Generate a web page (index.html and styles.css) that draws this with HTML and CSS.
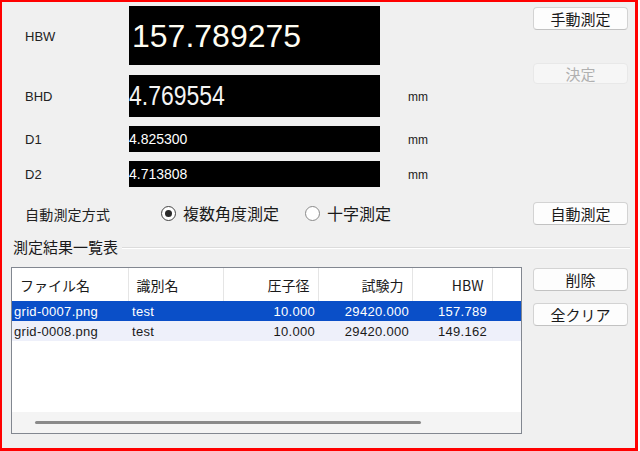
FILE: index.html
```html
<!DOCTYPE html>
<html lang="ja">
  <head>
    <meta charset="UTF-8" />
    <meta name="viewport" content="width=device-width, initial-scale=1.0" />
    <title>測定</title>
    <link rel="stylesheet" href="styles.css">
  </head>
  <body>
    <div class="window">
      <div class="top">
        <div class="label row-hbw">HBW</div>
        <div class="value big row-hbw"><span>157.789275</span></div>

        <div class="side">
          <button class="btn first">手動測定</button>
          <button class="btn disabled" disabled>決定</button>
        </div>

        <div class="label row-bhd">BHD</div>
        <div class="value mid row-bhd"><span>4.769554</span></div>
        <div class="unit row-bhd">mm</div>

        <div class="label row-d1">D1</div>
        <div class="value small row-d1"><span>4.825300</span></div>
        <div class="unit row-d1">mm</div>

        <div class="label row-d2">D2</div>
        <div class="value small row-d2"><span>4.713808</span></div>
        <div class="unit row-d2">mm</div>

        <div class="label jp row-mode">自動測定方式</div>
        <div class="radios row-mode">
          <label class="radio"><span class="dot checked"></span>複数角度測定</label>
          <label class="radio"><span class="dot"></span>十字測定</label>
        </div>
        <div class="btn-cell row-mode">
          <button class="btn">自動測定</button>
        </div>
      </div>

      <div class="group-title">
        <span>測定結果一覧表</span>
        <div class="etched"></div>
      </div>

      <div class="bottom">
        <div class="listbox">
          <div class="list-area">
            <table class="list">
              <colgroup>
                <col style="width: 116px" />
                <col style="width: 95px" />
                <col style="width: 95px" />
                <col style="width: 94px" />
                <col style="width: 80px" />
                <col />
              </colgroup>
              <thead>
                <tr>
                  <th>ファイル名</th>
                  <th>識別名</th>
                  <th class="num">圧子径</th>
                  <th class="num">試験力</th>
                  <th class="num">HBW</th>
                  <th class="filler"></th>
                </tr>
              </thead>
              <tbody>
                <tr class="selected">
                  <td class="first-col">grid-0007.png</td>
                  <td>test</td>
                  <td class="num">10.000</td>
                  <td class="num">29420.000</td>
                  <td class="num hbw">157.789</td>
                  <td></td>
                </tr>
                <tr class="alt">
                  <td class="first-col">grid-0008.png</td>
                  <td>test</td>
                  <td class="num">10.000</td>
                  <td class="num">29420.000</td>
                  <td class="num hbw">149.162</td>
                  <td></td>
                </tr>
              </tbody>
            </table>
          </div>
          <div class="hscroll"><div class="thumb"></div></div>
        </div>
        <div class="side-bottom">
          <button class="btn">削除</button>
          <button class="btn">全クリア</button>
        </div>
      </div>
    </div>
  </body>
</html>
```

FILE: styles.css
```css
body {
  margin: 0;
  padding: 0;
  background-color: #ffffff;
  font-family: "Noto Sans CJK JP", "Liberation Sans", sans-serif;
  color: #1a1a1a;
}
.window {
  box-sizing: border-box;
  width: 638px;
  height: 451px;
  border-style: solid;
  border-color: #ff0000;
  border-width: 2px 3px 3px 2px;
  background-color: #f0f0f0;
  padding-top: 4px;
}

/* upper measurement area */
.top {
  display: grid;
  grid-template-columns: 104px 251px 153px 95px;
  grid-template-rows: 59px 52px 35px 35px 39px;
  margin-left: 23px;
}
.row-hbw { grid-row: 1; }
.row-bhd { grid-row: 2; margin-top: 10px; }
.row-d1 { grid-row: 3; margin-top: 9px; }
.row-d2 { grid-row: 4; margin-top: 9px; }
.row-mode { grid-row: 5; margin-top: 13px; }
.label {
  grid-column: 1;
  display: flex;
  align-items: center;
  font-family: "Liberation Sans", sans-serif;
  font-size: 13px;
  color: #222;
  padding-top: 1px;
}
.label.jp {
  font-family: "Noto Sans CJK JP", sans-serif;
  font-size: 14px;
  letter-spacing: 0.2px;
}
.value {
  grid-column: 2;
  background-color: #000;
  color: #fff;
  font-family: "Liberation Sans", sans-serif;
  display: flex;
  align-items: center;
  overflow: hidden;
  white-space: nowrap;
}
.value span {
  display: inline-block;
  transform-origin: left center;
}
.value.big {
  font-size: 32px;
  padding-left: 3px;
  color: #fffdf2;
  padding-top: 1px;
}
.value.mid {
  font-size: 28px;
}
.value.mid span {
  transform: scaleX(0.82);
  color: #f4f4f4;
}
.value.small {
  font-size: 14px;
}
.unit {
  grid-column: 3;
  display: flex;
  align-items: center;
  padding-left: 28px;
  font-family: "Liberation Sans", sans-serif;
  font-size: 12px;
  color: #222;
  padding-top: 2px;
}
.side {
  grid-column: 4;
  grid-row: 1 / 3;
  display: flex;
  flex-direction: column;
}
.side .first {
  margin-top: 1px;
}
.side .disabled {
  margin-top: 33px;
  height: 21px;
}
.radios {
  grid-column: 2 / 4;
  display: flex;
  align-items: center;
  padding-left: 32px;
  gap: 26px;
}
.radio {
  display: flex;
  align-items: center;
  gap: 7px;
  font-size: 16px;
  color: #1a1a1a;
}
.dot {
  box-sizing: border-box;
  width: 15px;
  height: 15px;
  border-radius: 50%;
  border: 1px solid #8a8a8a;
  background-color: #fff;
  display: flex;
  align-items: center;
  justify-content: center;
}
.dot.checked {
  border-color: #444;
}
.dot.checked::after {
  content: "";
  width: 7px;
  height: 7px;
  border-radius: 50%;
  background-color: #2a2a2a;
}
.btn-cell {
  grid-column: 4;
  display: flex;
  align-items: center;
}

/* buttons */
.btn {
  box-sizing: border-box;
  width: 95px;
  height: 23px;
  padding: 0;
  font-family: "Noto Sans CJK JP", sans-serif;
  font-size: 15px;
  line-height: 1;
  color: #1a1a1a;
  background-color: #fdfdfd;
  border: 1px solid #d3d3d3;
  border-bottom-color: #c2c2c2;
  border-radius: 4px;
}
.btn.disabled {
  color: #b0b0b0;
  background-color: #f6f6f6;
  border-color: #e8e8e8;
}

/* group box title */
.group-title {
  display: flex;
  align-items: center;
  margin: 10px 5px 0 11px;
  height: 20px;
  font-size: 15px;
  color: #1a1a1a;
}
.etched {
  flex: 1;
  margin-left: 4px;
  margin-top: 3px;
  height: 0;
  border-top: 1px solid #dcdcdc;
  border-bottom: 1px solid #ffffff;
}

/* list + right buttons */
.bottom {
  display: flex;
  margin: 11px 0 0 9px;
  gap: 11px;
}
.listbox {
  box-sizing: border-box;
  width: 511px;
  height: 167px;
  border: 1px solid #828790;
  background-color: #fff;
  display: flex;
  flex-direction: column;
}
.list-area {
  flex: 1;
  overflow: hidden;
}
.list {
  width: 100%;
  table-layout: fixed;
  border-collapse: collapse;
}
.list th {
  height: 33px;
  padding: 0 8px;
  font-size: 14px;
  font-weight: normal;
  text-align: left;
  color: #1a1a1a;
  border-right: 1px solid #e5e5e5;
  white-space: nowrap;
}
.list th.num {
  text-align: right;
}
.list th.filler {
  border-right: none;
}
.list td {
  height: 20px;
  padding: 0 4px;
  font-family: "Liberation Sans", sans-serif;
  font-size: 13px;
  letter-spacing: 0.3px;
  white-space: nowrap;
  overflow: hidden;
}
.list td.first-col {
  padding-left: 2px;
}
.list td.num {
  text-align: right;
  padding-right: 3px;
}
.list td.hbw {
  padding-right: 5px;
}
.list tr.selected td {
  background-color: #0a4fc8;
  color: #ffffff;
}
.list tr.alt td {
  background-color: #eef0fa;
}
.hscroll {
  height: 21px;
  background-color: #f4f4f4;
  display: flex;
  align-items: center;
}
.thumb {
  margin-left: 23px;
  width: 386px;
  height: 3px;
  border-radius: 2px;
  background-color: #8a8a8a;
}
.side-bottom {
  display: flex;
  flex-direction: column;
  padding-top: 1px;
  gap: 12px;
}
```
